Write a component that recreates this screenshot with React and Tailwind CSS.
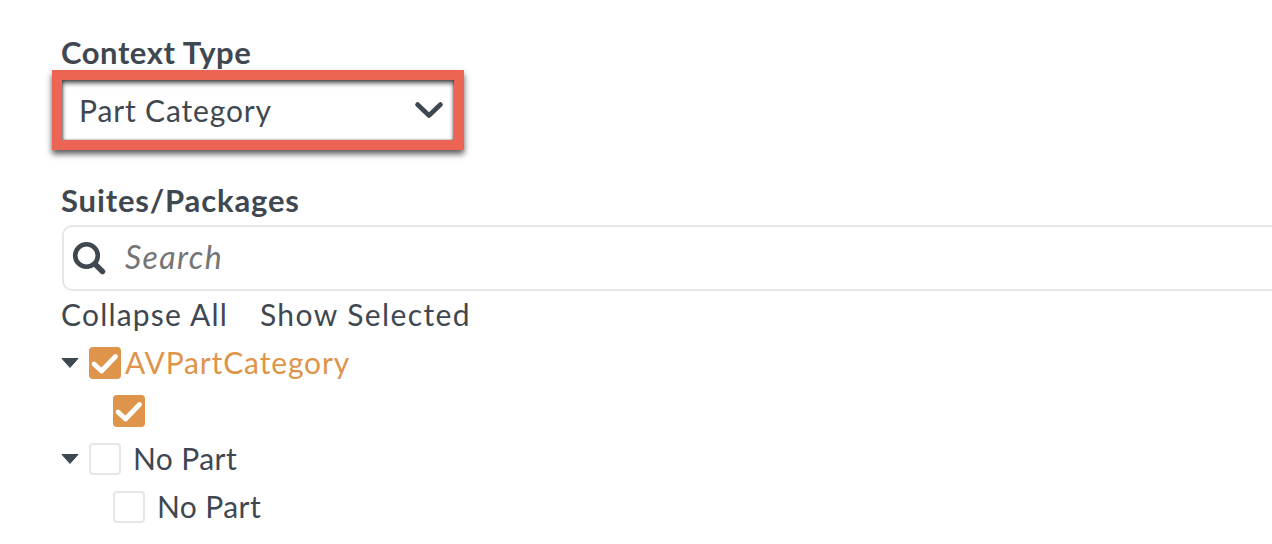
import React from "react";

const Check = () => (
  <svg viewBox="0 0 32 32" className="w-8 h-8 block">
    <path d="M5 17 L12.5 24 L26.5 9.5" fill="none" stroke="#fff" strokeWidth="4.8" strokeLinecap="round" strokeLinejoin="round" />
  </svg>
);

const Box = ({ checked }) =>
  checked ? (
    <span className="w-8 h-8 rounded-[4px] bg-[#df944b] shrink-0 block"><Check /></span>
  ) : (
    <span className="w-8 h-8 rounded-[4px] border-2 border-[#e6e6e6] bg-white shrink-0 block" />
  );

const Caret = () => (
  <svg viewBox="0 0 18 12" className="w-[18px] h-3 block shrink-0 -ml-px mr-px">
    <path d="M1 1.5 H17 L9 10.5 Z" fill="#3f4850" stroke="#3f4850" strokeWidth="1" strokeLinejoin="round" />
  </svg>
);

export default function App() {
  return (
    <div className="w-[1272px] h-[544px] overflow-hidden bg-white text-[#3f4850] text-[30px] font-['Lato','Open_Sans',sans-serif] pl-[62px] pt-[36px]">
      <div className="w-[1300px]">
        <div className="font-bold text-[31px] leading-[34px] h-[34px] tracking-[0.55px] -ml-px -mt-px mb-px">Context Type</div>
        <div className="-ml-[10px] w-[412px] h-[80px] border-[10px] border-[#ec6453] bg-white shadow-[0_4px_6px_rgba(0,0,0,0.65),inset_0_3px_5px_rgba(0,0,0,0.7),inset_1px_0_2px_rgba(0,0,0,0.25),inset_-1px_0_2px_rgba(0,0,0,0.25)] flex items-center justify-between pl-[17px] pr-[10px]">
          <span className="leading-none tracking-[0.85px] -mt-[1px]">Part Category</span>
          <svg viewBox="0 0 30 20" className="w-[30px] h-5 block">
            <path d="M3.5 4.5 L15 15.5 L26.5 4.5" fill="none" stroke="#3f4850" strokeWidth="4.6" strokeLinecap="round" strokeLinejoin="round" />
          </svg>
        </div>
        <div className="font-bold text-[31px] leading-[34px] h-[34px] mt-[33px] tracking-[0.85px] -ml-px">Suites/Packages</div>
        <div className="mt-[8px] h-[66px] border-2 border-[#e6e6e6] rounded-[10px] flex items-center pl-[8px] gap-[19px]">
          <svg viewBox="0 0 34 34" className="w-[34px] h-[34px] block shrink-0">
            <circle cx="14.5" cy="14.5" r="11.3" fill="none" stroke="#3f4850" strokeWidth="4.6" />
            <path d="M23 23 L30.5 30.5" stroke="#3f4850" strokeWidth="5.4" strokeLinecap="round" />
          </svg>
          <span className="italic text-[32px] text-[#757575] tracking-[1.4px] leading-none -mt-[3px]">Search</span>
        </div>
        <div className="flex gap-[32px] h-[48px] items-center -ml-px -mt-px mb-px">
          <span className="tracking-[1.2px]">Collapse All</span>
          <span className="tracking-[1.4px]">Show Selected</span>
        </div>
        <div className="flex items-center h-[48px]">
          <Caret />
          <span className="ml-[9px]"><Box checked /></span>
          <span className="ml-[4px] -mt-[2px] text-[#df944b] tracking-[0.85px]">AVPartCategory</span>
        </div>
        <div className="flex items-center h-[48px] pl-[51px]">
          <Box checked />
        </div>
        <div className="flex items-center h-[48px]">
          <Caret />
          <span className="ml-[9px]"><Box /></span>
          <span className="ml-[12px] -mt-[2px] tracking-[0.4px]">No Part</span>
        </div>
        <div className="flex items-center h-[48px] pl-[51px]">
          <Box />
          <span className="ml-[12px] -mt-[2px] tracking-[0.4px]">No Part</span>
        </div>
      </div>
    </div>
  );
}
